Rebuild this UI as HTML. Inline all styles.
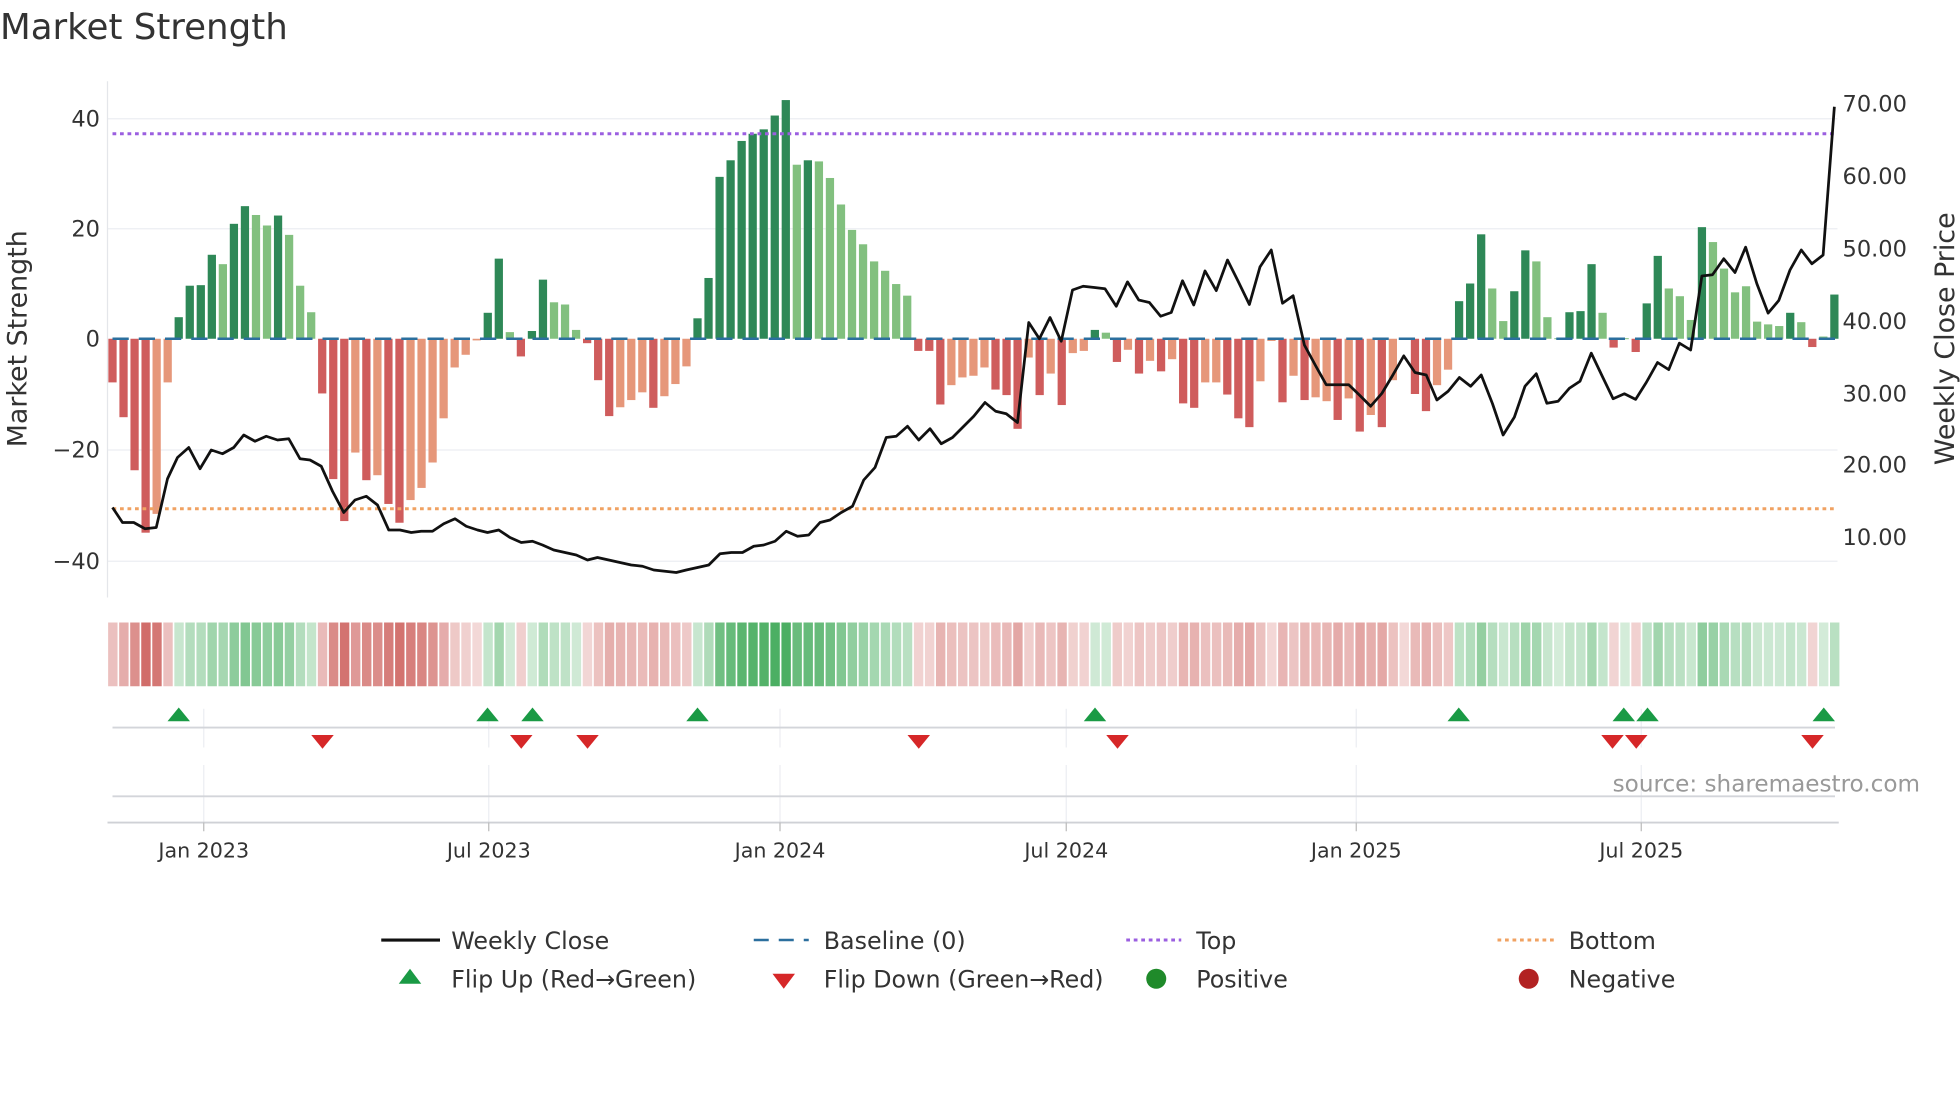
<!DOCTYPE html>
<html><head><meta charset="utf-8">
<style>
html,body{margin:0;padding:0;background:#fff;}
svg{display:block;font-family:"DejaVu Sans","Liberation Sans",sans-serif;}
</style></head>
<body>
<svg id="s" width="1960" height="1102" viewBox="0 0 1568 881.6" xmlns="http://www.w3.org/2000/svg">
<rect width="1568" height="881.6" fill="#fff"/>
<text x="0" y="31" font-size="28.5" fill="#333">Market Strength</text>
<g stroke="#eceef2" stroke-width="1">
<line x1="86" y1="95" x2="1470" y2="95"/>
<line x1="86" y1="183" x2="1470" y2="183"/>
<line x1="86" y1="360" x2="1470" y2="360"/>
<line x1="86" y1="449" x2="1470" y2="449"/>
</g>
<line x1="86" y1="65" x2="86" y2="478" stroke="#e4e6ea" stroke-width="1"/>
<g id="bars"></g>
<line x1="90" y1="271" x2="1470" y2="271" stroke="#2b6f9e" stroke-width="2" stroke-dasharray="13,8"/>
<line x1="90" y1="107" x2="1470" y2="107" stroke="#9b5fe0" stroke-width="2.4" stroke-dasharray="3,3"/>
<line x1="90" y1="407" x2="1470" y2="407" stroke="#f0a262" stroke-width="2.4" stroke-dasharray="3,3"/>
<polyline id="price" fill="none" stroke="#111" stroke-width="2.2" stroke-linejoin="round"/>
<g font-size="18" fill="#333" text-anchor="end">
<text x="80" y="101">40</text>
<text x="80" y="189">20</text>
<text x="80" y="277">0</text>
<text x="80" y="366">−20</text>
<text x="80" y="455">−40</text>
</g>
<g font-size="18" fill="#333">
<text x="1474" y="89">70.00</text>
<text x="1474" y="147">60.00</text>
<text x="1474" y="205">50.00</text>
<text x="1474" y="263">40.00</text>
<text x="1474" y="321">30.00</text>
<text x="1474" y="378">20.00</text>
<text x="1474" y="436">10.00</text>
</g>
<text transform="translate(21,271) rotate(-90)" font-size="21.5" fill="#333" text-anchor="middle">Market Strength</text>
<text transform="translate(1563,271) rotate(-90)" font-size="21.5" fill="#333" text-anchor="middle">Weekly Close Price</text>
<g id="heat"></g>
<g stroke="#eceef2" stroke-width="1">
<line x1="163" y1="567" x2="163" y2="598"/><line x1="391" y1="567" x2="391" y2="598"/><line x1="624" y1="567" x2="624" y2="598"/><line x1="853" y1="567" x2="853" y2="598"/><line x1="1085" y1="567" x2="1085" y2="598"/><line x1="1313" y1="567" x2="1313" y2="598"/>
<line x1="163" y1="612" x2="163" y2="658"/><line x1="391" y1="612" x2="391" y2="658"/><line x1="624" y1="612" x2="624" y2="658"/><line x1="853" y1="612" x2="853" y2="658"/><line x1="1085" y1="612" x2="1085" y2="658"/><line x1="1313" y1="612" x2="1313" y2="658"/>
</g>
<line x1="90" y1="582" x2="1468" y2="582" stroke="#d3d5da" stroke-width="1.5"/>
<line x1="90" y1="637" x2="1468" y2="637" stroke="#d3d5da" stroke-width="1.5"/>
<line x1="86" y1="658" x2="1471" y2="658" stroke="#cfd1d6" stroke-width="1.5"/>
<g stroke="#bbb" stroke-width="1">
<line x1="163" y1="658" x2="163" y2="665"/><line x1="391" y1="658" x2="391" y2="665"/><line x1="624" y1="658" x2="624" y2="665"/><line x1="853" y1="658" x2="853" y2="665"/><line x1="1085" y1="658" x2="1085" y2="665"/><line x1="1313" y1="658" x2="1313" y2="665"/>
</g>
<g id="flips"></g>
<text x="1536" y="633" font-size="18.5" fill="#999" text-anchor="end">source: sharemaestro.com</text>
<g font-size="16.5" fill="#333" text-anchor="middle">
<text x="163" y="686">Jan 2023</text><text x="391" y="686">Jul 2023</text><text x="624" y="686">Jan 2024</text><text x="853" y="686">Jul 2024</text><text x="1085" y="686">Jan 2025</text><text x="1313" y="686">Jul 2025</text>
</g>
<line x1="305" y1="752" x2="352" y2="752" stroke="#111" stroke-width="2.5"/>
<line x1="603" y1="752" x2="647" y2="752" stroke="#2b6f9e" stroke-width="2" stroke-dasharray="12,8"/>
<line x1="901" y1="752" x2="945" y2="752" stroke="#9b5fe0" stroke-width="2.4" stroke-dasharray="3,3"/>
<line x1="1198" y1="752" x2="1243" y2="752" stroke="#f0a262" stroke-width="2.4" stroke-dasharray="3,3"/>
<polygon points="319,787 337,787 328,775" fill="#1a9a45"/>
<polygon points="618,779 636,779 627,791" fill="#d62728"/>
<circle cx="925" cy="783" r="8" fill="#1f8a2a"/>
<circle cx="1223" cy="783" r="8" fill="#b22222"/>
<g font-size="19" fill="#333">
<text x="361" y="759">Weekly Close</text>
<text x="659" y="759">Baseline (0)</text>
<text x="957" y="759">Top</text>
<text x="1255" y="759">Bottom</text>
<text x="361" y="790">Flip Up (Red→Green)</text>
<text x="659" y="790">Flip Down (Green→Red)</text>
<text x="957" y="790">Positive</text>
<text x="1255" y="790">Negative</text>
</g>
</svg>
<script>
var D="-7.9d -14.2d -23.8d -35.1d -31.7l -7.9l 3.9d 9.6d 9.7d 15.2d 13.5l 20.8d 24d 22.4l 20.5l 22.3d 18.8l 9.6l 4.8l -9.9d -25.4d -33d -20.6l -25.6d -24.7l -29.9d -33.3d -29.2l -27l -22.4l -14.4l -5.2l -2.9l -0.3l 4.7d 14.5d 1.2l -3.2d 1.4d 10.7d 6.6l 6.2l 1.6l -0.8d -7.5d -14d -12.4l -11.1l -9.7l -12.5d -10.4l -8.2l -5l 3.7d 11d 29.3d 32.3d 35.8d 37.1d 37.9d 40.4d 43.2d 31.5l 32.3d 32.1l 29.1l 24.3l 19.7l 17.1l 14l 12.3l 9.9l 7.8l -2.2d -2.2d -11.9d -8.4l -7l -6.7l -5.2l -9.2d -10.2d -16.3d -3.4l -10.2d -6.3l -12d -2.6l -2.2l 1.6d 1.1l -4.2d -2l -6.3d -4l -5.9d -3.7l -11.7d -12.5d -7.9l -7.9l -10.1d -14.4d -16d -7.7l -0.4l -11.5d -6.7l -11.1d -10.6l -11.3l -14.7d -10.8l -16.8d -13.8l -16d -7.5l -0.2l -10d -13.1d -8.4l -5.6l 6.8d 10d 18.9d 9.1l 3.2l 8.6d 16d 14l 3.9l 0.1l 4.8d 5d 13.5d 4.7l -1.6d 0.1l -2.4d 6.4d 15d 9.1l 7.7l 3.4l 20.2d 17.5l 12.7l 8.4l 9.5l 3.1l 2.6l 2.3l 4.7d 3l -1.5d 0.4l 8d".split(" ");
var NS="http://www.w3.org/2000/svg";
function el(t,a,p){var e=document.createElementNS(NS,t);for(var k in a)e.setAttribute(k,a[k]);p.appendChild(e);return e;}
var bars=document.getElementById("bars"),heat=document.getElementById("heat");
var n=D.length,step=(1467.5-90)/(n-1);
function mix(c,a){return "rgb("+c.map(function(v){return Math.round(255-(255-v)*a)}).join(",")+")";}
for(var i=0;i<n;i++){
 var v=parseFloat(D[i]),t=D[i].slice(-1),x=90+step*i;
 var col=v>=0?(t=="d"?"#2e8857":"#82c07f"):(t=="d"?"#cf5c5c":"#e6977a");
 var y0=271,y1=271-v*4.42;
 el("rect",{x:(x-3.3).toFixed(2),y:Math.min(y0,y1).toFixed(2),width:6.6,height:Math.max(Math.abs(y1-y0),0.8).toFixed(2),fill:col},bars);
 var a=0.22+0.7*Math.min(Math.abs(v)/40,1);
 var hc=v>=0?mix([60,168,85],a):mix([200,80,76],a);
 el("rect",{x:(86+step*i+0.5).toFixed(2),y:498,width:(step-1.3).toFixed(2),height:51,fill:hc},heat);
}
var P="90,406 98,418 107,418 116,423 125,422 134,383 142,366 151,358 160,375 169,360 178,363 187,358 195,348 204,353 213,349 222,352 231,351 240,367 248,368 257,373 266,393 275,410 284,400 293,397 302,404 311,424 320,424 329,426 337,425 346,425 355,419 364,415 373,421 382,424 390,426 399,424 408,430 417,434 426,433 434,436 443,440 452,442 461,444 470,448 478,446 487,448 496,450 505,452 514,453 523,456 532,457 541,458 549,456 558,454 567,452 576,443 585,442 594,442 603,437 611,436 620,433 629,425 638,429 647,428 656,418 664,416 673,410 682,405 691,384 700,374 709,350 717,349 726,341 735,352 744,343 753,355 762,350 771,341 779,333 788,322 796.5,329 805,331 814,338 823,258 831.5,271 840,254 849,273 858,232 866.5,229 875.5,230 884,231 893,245 902,225.5 911,240 919.5,242 928.5,253 937,250 946,224.6 955,244 964,216.7 973,232.5 982,208 990.5,225 999.5,243.6 1008,213.5 1017,200 1026,242.6 1034.5,236.6 1043.5,276 1052.5,292.6 1061,307.8 1070,307.8 1079,307.8 1087.5,316 1096.5,325 1105.5,314.7 1114,300.5 1123,284.7 1132,298 1141,300 1149.5,320 1158.5,313 1167.5,302 1176.5,309 1185,300 1194,323 1202.5,348 1211.5,333.7 1220,309 1229,299 1237.5,322.6 1246.5,321 1255.5,310.6 1264,305 1273,282.5 1282,301.4 1290.5,319 1299.5,315 1308.5,319.5 1317,306 1326,290 1335,295.7 1343.5,274.5 1352.5,280 1361.5,220.8 1370,219.8 1379,207 1388,218 1396.5,197.7 1405.5,227 1414.5,250.5 1423,240.4 1432,216 1441,200 1449.5,211 1458.5,204 1467.5,85.4";
document.getElementById("price").setAttribute("points",P);
var f=document.getElementById("flips");
[143,390,426,558,876,1167,1299,1318,1459].forEach(function(x){el("polygon",{points:(x-9)+",577 "+(x+9)+",577 "+x+",566",fill:"#1a9a45"},f);});
[258,417,470,735,894,1290,1309,1450].forEach(function(x){el("polygon",{points:(x-9)+",588 "+(x+9)+",588 "+x+",599",fill:"#d62728"},f);});
</script>
</body></html>
